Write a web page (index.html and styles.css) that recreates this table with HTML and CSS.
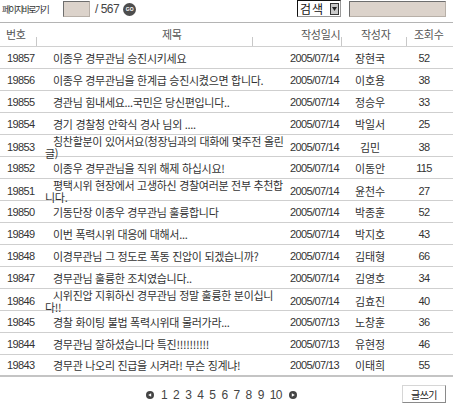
FILE: index.html
```html
<!DOCTYPE html>
<html lang="ko">
<head>
<meta charset="utf-8">
<link rel="stylesheet" href="styles.css">
</head>
<body>
<div class="page">
  <div class="topbar">
    <div class="goto">
      <span class="goto-label">페이지바로가기</span>
      <span class="box goto-input"></span>
      <span class="total">/ 567</span>
      <span class="go-btn">GO</span>
    </div>
    <div class="search">
      <div class="fake-select"><span class="sel-text">검색</span><span class="sel-arrow"><svg width="5" height="4" viewBox="0 0 5 4"><path d="M0 0H5L2.5 4Z" fill="#222"/></svg></span></div>
      <span class="box search-input"></span>
    </div>
  </div>

  <div class="list">
    <div class="head">
      <div class="h h-num">번호</div>
      <div class="h h-title sep">제목</div>
      <div class="h h-date sep">작성일시</div>
      <div class="h h-author sep">작성자</div>
      <div class="h h-views sep">조회수</div>
    </div>

    <div class="row"><div class="num">19857</div><div class="title">이종우 경무관님 승진시키세요</div><div class="date">2005/07/14</div><div class="author">장현국</div><div class="views">52</div></div>
    <div class="row"><div class="num">19856</div><div class="title">이종우 경무관님을 한계급 승진시켰으면 합니다.</div><div class="date">2005/07/14</div><div class="author">이호용</div><div class="views">38</div></div>
    <div class="row"><div class="num">19855</div><div class="title">경관님 힘내세요...국민은 당신편입니다..</div><div class="date">2005/07/14</div><div class="author">정승우</div><div class="views">33</div></div>
    <div class="row"><div class="num">19854</div><div class="title">경기 경찰청 안학식 경사 님외 ....</div><div class="date">2005/07/14</div><div class="author">박일서</div><div class="views">25</div></div>
    <div class="row"><div class="num">19853</div><div class="title">칭찬할분이 있어서요(청장님과의 대화에 몇주전 올린 글)</div><div class="date">2005/07/14</div><div class="author">김민</div><div class="views">38</div></div>
    <div class="row"><div class="num">19852</div><div class="title">이종우 경무관님을 직위 해제 하십시요!</div><div class="date">2005/07/14</div><div class="author">이동안</div><div class="views">115</div></div>
    <div class="row"><div class="num">19851</div><div class="title">평택시위 현장에서 고생하신 경찰여러분 전부 추천합니다.</div><div class="date">2005/07/14</div><div class="author">윤천수</div><div class="views">27</div></div>
    <div class="row"><div class="num">19850</div><div class="title">기동단장 이종우 경무관님 훌륭합니다</div><div class="date">2005/07/14</div><div class="author">박종훈</div><div class="views">52</div></div>
    <div class="row"><div class="num">19849</div><div class="title">이번 폭력시위 대응에 대해서...</div><div class="date">2005/07/14</div><div class="author">박지호</div><div class="views">43</div></div>
    <div class="row"><div class="num">19848</div><div class="title">이경무관님 그 정도로 폭동 진압이 되겠습니까?</div><div class="date">2005/07/14</div><div class="author">김태형</div><div class="views">66</div></div>
    <div class="row"><div class="num">19847</div><div class="title">경무관님 훌륭한 조치였습니다..</div><div class="date">2005/07/14</div><div class="author">김영호</div><div class="views">34</div></div>
    <div class="row"><div class="num">19846</div><div class="title">시위진압 지휘하신 경무관님 정말 훌륭한 분이십니다!!</div><div class="date">2005/07/14</div><div class="author">김효진</div><div class="views">40</div></div>
    <div class="row"><div class="num">19845</div><div class="title">경찰 화이팅 불법 폭력시위대 물러가라...</div><div class="date">2005/07/13</div><div class="author">노창훈</div><div class="views">36</div></div>
    <div class="row"><div class="num">19844</div><div class="title">경무관님 잘하셨습니다 특진!!!!!!!!!!</div><div class="date">2005/07/13</div><div class="author">유현정</div><div class="views">46</div></div>
    <div class="row last"><div class="num">19843</div><div class="title">경무관 나오리 진급을 시켜라! 무슨 징계냐!</div><div class="date">2005/07/13</div><div class="author">이태희</div><div class="views">55</div></div>
  </div>

  <div class="footer">
    <div class="pager">
      <svg class="arrow" width="8" height="8" viewBox="0 0 8 8"><circle cx="4" cy="4" r="4" fill="#444"/><path d="M2.2 4L5.2 2.2V5.8Z" fill="#fff"/></svg>
      <span>1</span><span>2</span><span>3</span><span>4</span><span>5</span><span>6</span><span>7</span><span>8</span><span>9</span><span>10</span>
      <svg class="arrow" width="8" height="8" viewBox="0 0 8 8"><circle cx="4" cy="4" r="4" fill="#444"/><path d="M5.8 4L2.8 2.2V5.8Z" fill="#fff"/></svg>
    </div>
    <div class="write-btn">글쓰기</div>
  </div>
</div>
</body>
</html>
```

FILE: styles.css
```css
* { box-sizing: border-box; }
html, body { margin: 0; padding: 0; background: #fff; }
body {
  font-family: "Noto Sans CJK KR", "Liberation Sans", sans-serif;
  font-size: 11px;
  color: #333;
}
.page { width: 453px; }

.topbar {
  height: 22px;
  display: flex;
  justify-content: space-between;
  align-items: flex-start;
}
.goto {
  display: flex;
  align-items: center;
  height: 18px;
  padding-left: 2px;
}
.goto-label {
  font-size: 9px;
  letter-spacing: -1.7px;
  color: #333;
  width: 61px;
}
.box {
  display: block;
  background: #dcd3cb;
  border: 1px solid #6e6e6e;
  border-right-color: #b8b0a8;
  border-bottom-color: #b8b0a8;
}
.goto-input { width: 27px; height: 16px; }
.total {
  margin-left: 5px;
  font-family: "Liberation Sans", sans-serif;
  font-size: 12px;
  letter-spacing: -0.5px;
  color: #444;
}
.go-btn {
  margin-left: 4px;
  width: 13px;
  height: 13px;
  border-radius: 50%;
  background: #4d4d4d;
  color: #fff;
  font-family: "Liberation Sans", sans-serif;
  font-size: 5px;
  font-weight: bold;
  display: flex;
  align-items: center;
  justify-content: center;
}
.search {
  display: flex;
  align-items: flex-start;
  padding-right: 7px;
}
.fake-select {
  width: 44px;
  height: 17px;
  border: 1px solid #111;
  border-right-color: #999;
  border-bottom-color: #999;
  background: #fff;
  display: flex;
  align-items: center;
  justify-content: space-between;
  padding: 0 1px 0 2px;
}
.sel-text { font-size: 12px; letter-spacing: 1px; color: #111; line-height: 15px; }
.sel-arrow {
  width: 9px;
  height: 12px;
  background: #c8c8c8;
  border: 1px solid #333;
  display: flex;
  align-items: center;
  justify-content: center;
}
.search-input { width: 97px; height: 16px; margin-left: 8px; margin-top: 1px; }

.list { border-top: 1px solid #b4b4b4; }
.head, .row {
  display: grid;
}
.head {
  grid-template-columns: 36px 216px 89px 65px 47px;
  height: 24px;
  border-bottom: 1px solid #d0d0d0;
}
.h {
  display: flex;
  align-items: center;
  color: #555;
  letter-spacing: -0.3px;
  padding-bottom: 2px;
}
.sep {
  background: linear-gradient(#c8c8c8, #c8c8c8) left bottom / 1px 9px no-repeat;
}
.h-num { padding-left: 6px; }
.h-title { padding-left: 126px; }
.h-date { padding-left: 49px; }
.h-author { padding-left: 20px; }
.h-views { padding-left: 8px; }

.row {
  grid-template-columns: 36px 252px 53px 58px 50px;
  height: 22px;
  border-bottom: 1px solid #cfcfcf;
  align-items: center;
}
.row.last { border-bottom: 2px solid #c4c4c4; }
.row > div { line-height: 12px; min-width: 0; }
.num, .date, .views {
  font-family: "Liberation Sans", sans-serif;
  font-size: 11px;
  letter-spacing: -0.6px;
  color: #333;
}
.num { padding-left: 7px; }
.title {
  padding-left: 9px;
  text-indent: 8px;
  letter-spacing: -0.3px;
  color: #333;
}
.date, .author, .views { text-align: center; }
.author { letter-spacing: -0.2px; }

.footer {
  display: flex;
  justify-content: space-between;
  align-items: flex-start;
  padding-top: 8px;
}
.pager {
  margin-left: 145px;
  margin-top: 3px;
  display: flex;
  align-items: center;
  gap: 6px;
  font-family: "Liberation Sans", sans-serif;
  font-size: 12px;
  letter-spacing: -0.6px;
  color: #444;
}
.pager .arrow { margin: 0 1px; }
.write-btn {
  margin-right: 7px;
  width: 44px;
  height: 18px;
  border: 1px solid #d6d6d6;
  border-right-color: #8a8a8a;
  border-bottom-color: #8a8a8a;
  background: #fff;
  display: flex;
  align-items: center;
  justify-content: center;
  font-size: 10px;
  letter-spacing: -0.5px;
  color: #222;
}
```
